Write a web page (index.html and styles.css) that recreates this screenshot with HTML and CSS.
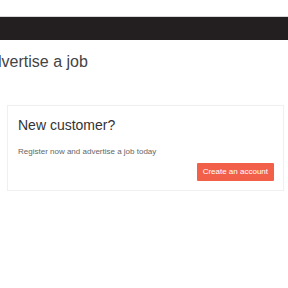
FILE: index.html
```html
<!DOCTYPE html>
<html>
<head>
<meta charset="utf-8">
<link rel="stylesheet" href="styles.css">
</head>
<body>
<div class="topbar"></div>
<h1 class="page-title">Advertise a job</h1>
<div class="card">
  <h2 class="card-title">New customer?</h2>
  <p class="card-text">Register now and advertise a job today</p>
  <div class="card-actions">
    <a class="btn" href="#">Create an account</a>
  </div>
</div>
</body>
</html>
```
FILE: styles.css
```css
html, body {
  margin: 0;
  padding: 0;
  background: #fff;
  font-family: "Liberation Sans", Arial, sans-serif;
  overflow: hidden;
}
.topbar {
  margin-top: 16px;
  height: 23px;
  background: #231f20;
  border-top: 1px solid #d8d8d8;
}
.page-title {
  margin: 12px 0 0 -18px;
  font-size: 16px;
  line-height: 19px;
  font-weight: normal;
  color: #444;
  white-space: nowrap;
}
.card {
  margin: 34px 4px 0 7px;
  border: 1px solid #f0f0f0;
  box-shadow: 0 0 1px rgba(0,0,0,0.04);
  padding: 11px 9px 9px 10px;
}
.card-title {
  margin: 0;
  font-size: 14px;
  line-height: 17px;
  font-weight: normal;
  color: #333;
}
.card-text {
  margin: 13px 0 0;
  font-size: 8px;
  line-height: 10px;
  color: #666;
}
.card-actions {
  display: flex;
  justify-content: flex-end;
  margin-top: 6px;
}
.btn {
  display: block;
  height: 18px;
  line-height: 18px;
  padding: 0 6px;
  background: #f3604a;
  color: #fff;
  font-size: 8px;
  text-decoration: none;
  border-radius: 1px;
}
```
